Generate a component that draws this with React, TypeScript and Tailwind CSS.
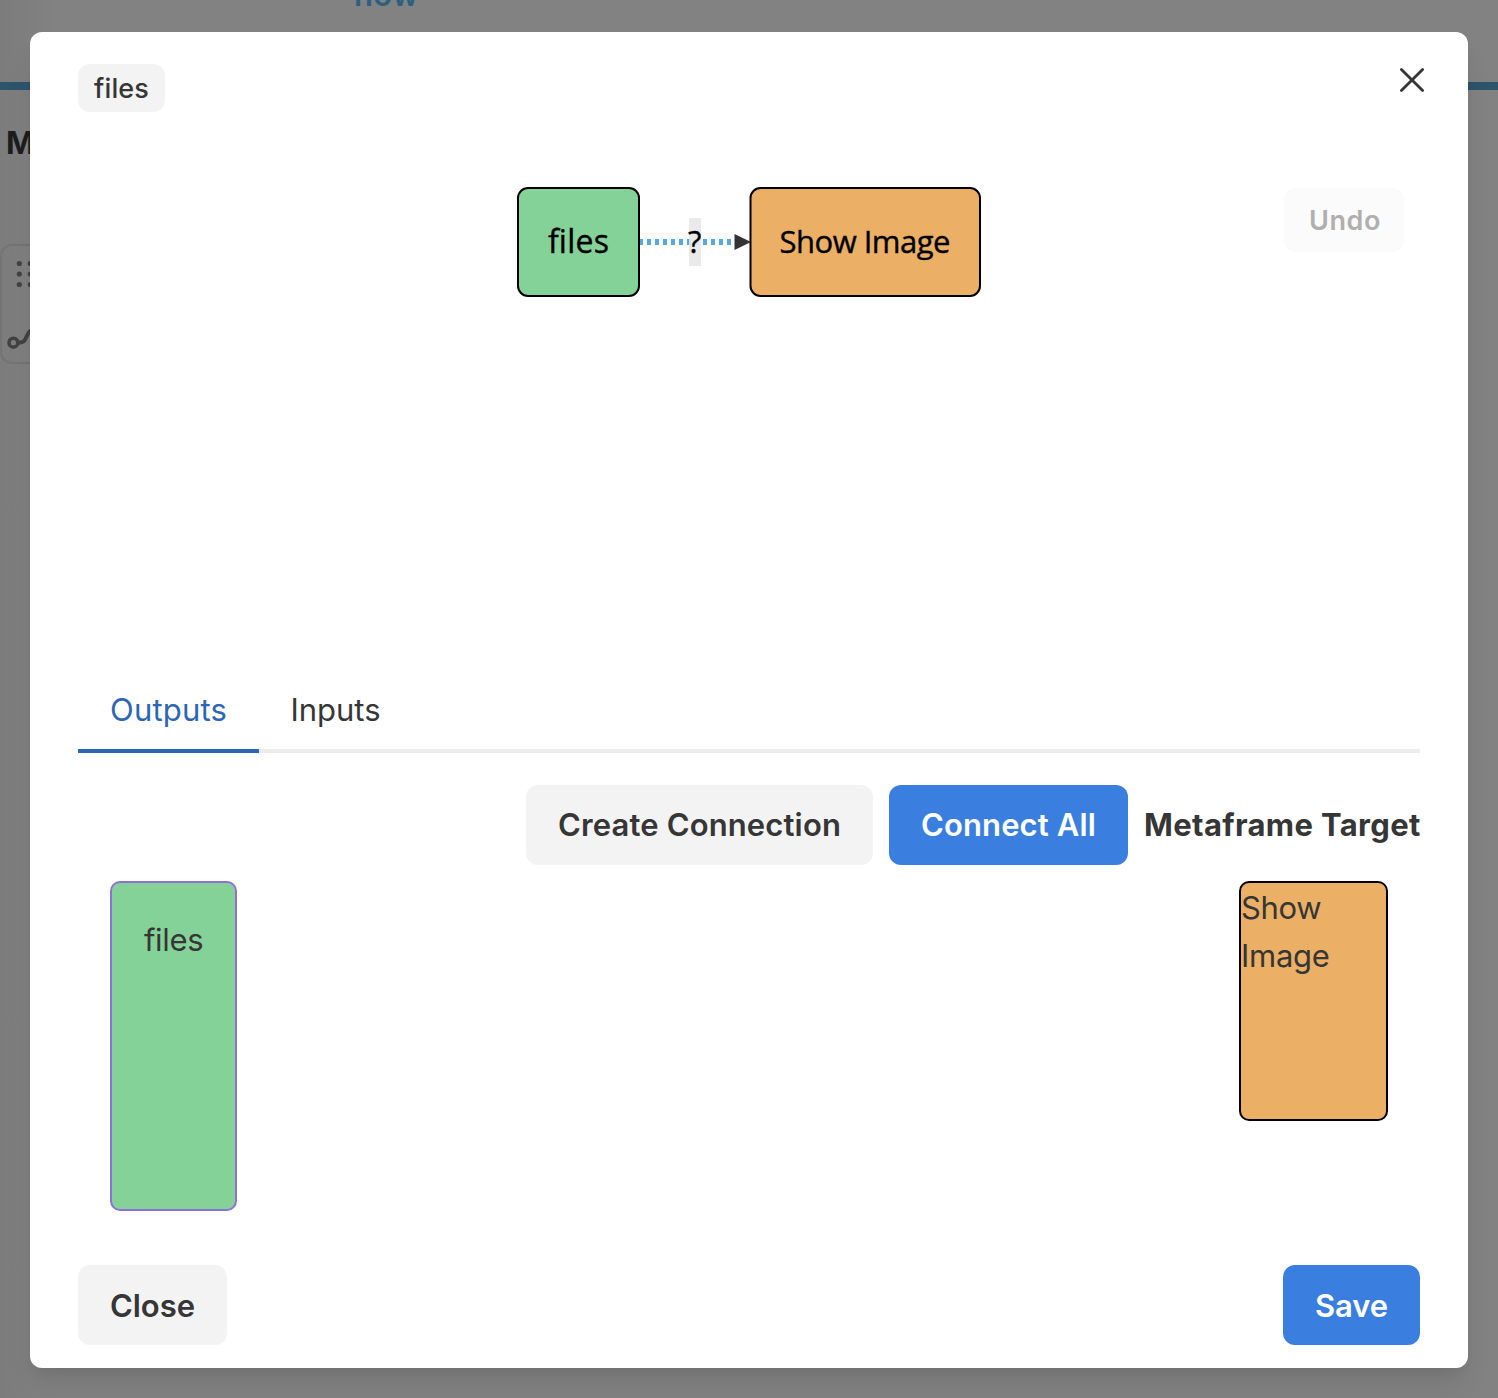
import type { ReactNode } from "react";

function Button({ primary = false, className = "", children }: { primary?: boolean; className?: string; children: ReactNode }) {
  const tone = primary ? "bg-[#3a7fe0] text-white" : "bg-[#f3f3f3] text-[#363636]";
  return (
    <button className={`flex h-20 shrink-0 items-center justify-center whitespace-nowrap rounded-xl text-[31px] font-semibold ${tone} ${className}`}>
      {children}
    </button>
  );
}

function PageBehind() {
  return (
    <div className="h-full bg-gradient-to-r from-[#7c7c7c] via-[#828282] via-[4%] to-[#828282]">
      <header className="flex h-[90px] items-start border-b-8 border-[#2d546d] pl-[354px] text-[31px] font-semibold leading-[38px] tracking-[0.4px] text-[#2d5f80]">
        <span className="-mt-6">now</span>
      </header>
      <h2 className="mt-[33px] pl-1.5 text-[31px] font-bold leading-10 text-[#1d1d1d]">Metaframes</h2>
      <div className="mt-[81px] h-[120px] w-40 rounded-xl border-2 border-[#747474]">
        <svg width="60" height="116" viewBox="2 246 60 116" fill="none">
          <g fill="#424242">
            {[263.5, 274, 284.5].map((y) => (
              <g key={y}>
                <circle cx="19.3" cy={y} r="2.6" />
                <circle cx="30.3" cy={y} r="2.6" />
              </g>
            ))}
          </g>
          <circle cx="13.4" cy="342.7" r="4.4" stroke="#424242" strokeWidth="3.6" />
          <path d="M18 342.7c7 0 7-3 9-7s3-6 8-6" stroke="#424242" strokeWidth="4" />
        </svg>
      </div>
    </div>
  );
}

function Graph() {
  return (
    <svg width="466" height="112" viewBox="516 186 466 112" fontFamily="Open Sans, sans-serif" fontSize="31">
      <path d="M639 242H736" stroke="#56a9dc" strokeWidth="6" strokeDasharray="4 4" />
      <path d="M734.5 234L751 242L734.5 250Z" fill="#333" />
      <rect x="518" y="188" width="121" height="108" rx="10" fill="#85d298" stroke="#000" strokeWidth="2" />
      <rect x="750.5" y="188" width="229.5" height="108" rx="10" fill="#ebb065" stroke="#000" strokeWidth="2" />
      <rect x="689" y="218" width="12" height="48" fill="#e8e8e8" fillOpacity="0.9" />
      <g stroke="#000" strokeWidth="0.4">
        <text x="548" y="253" fontSize="32" textLength="61">files</text>
        <text x="688" y="253">?</text>
        <text x="779.5" y="253" textLength="171">Show Image</text>
      </g>
    </svg>
  );
}

export default function App() {
  return (
    <div className="relative h-[1398px] w-[1498px] overflow-hidden font-['Inter',sans-serif] text-[#363636]">
      <PageBehind />
      <div role="dialog" className="absolute inset-x-[30px] bottom-[30px] top-8 flex flex-col rounded-xl bg-white px-12 pb-[23px] pt-8 shadow-[0_20px_30px_-6px_rgba(0,0,0,0.1),0_8px_12px_-4px_rgba(0,0,0,0.05)]">
        <div className="flex h-12 items-start justify-between">
          <span className="flex h-12 w-[87px] items-center justify-center rounded-xl bg-[#f3f3f3] pt-0.5 text-[27px] font-medium tracking-[0.15px]">files</span>
          <button aria-label="Close dialog" className="mr-[-8px] flex size-8 items-center justify-center">
            <svg width="26" height="26" viewBox="0 0 26 26" stroke="#363636" strokeWidth="2.8" strokeLinecap="round">
              <path d="M2.4 2.4L23.6 23.6M23.6 2.4L2.4 23.6" />
            </svg>
          </button>
        </div>

        <div className="mt-[74px] grid h-[483px] grid-cols-[1fr_auto_1fr] items-start">
          <span />
          <Graph />
          <button disabled className="mr-4 mt-0.5 flex h-16 w-[120px] items-center justify-center justify-self-end rounded-xl bg-[#fbfbfb] pl-0.5 pt-0.5 text-[27px] font-semibold tracking-[0.55px] text-[#afafaf]">
            Undo
          </button>
        </div>

        <nav className="flex h-[84px] shrink-0 border-b-4 border-[#ececec] text-[31px]">
          <a className="-mb-1 flex w-[181px] items-center justify-center border-b-4 border-[#2c66b4] pt-0.5 tracking-[0.18px] text-[#2c66b4]">Outputs</a>
          <a className="-mb-1 flex w-[153px] items-center justify-center border-b-4 border-transparent pt-0.5">Inputs</a>
        </nav>

        <div className="mt-8 flex items-center justify-end gap-4">
          <Button className="w-[347px] tracking-[0.14px]">Create Connection</Button>
          <Button primary className="w-[239px] tracking-[0.13px]">Connect All</Button>
          <h3 className="w-[276px] whitespace-nowrap text-[31px] font-bold tracking-[0.35px]">Metaframe Target</h3>
        </div>

        <div className="mt-4 flex items-start justify-between px-8 text-[31px] leading-[48px]">
          <div className="h-[330px] w-[127px] rounded-[10px] border-2 border-[#8f70d8] bg-[#85d298] px-8 pt-[33px] tracking-[-0.35px]">files</div>
          <div className="h-60 w-[149px] rounded-[10px] border-2 border-black bg-[#ebb065] pt-px tracking-[-0.3px]">
            Show
            <br />
            Image
          </div>
        </div>

        <footer className="mt-auto flex justify-between">
          <Button className="w-[149px] pt-0.5">Close</Button>
          <Button primary className="w-[137px] pt-0.5 tracking-[-0.1px]">Save</Button>
        </footer>
      </div>
    </div>
  );
}
